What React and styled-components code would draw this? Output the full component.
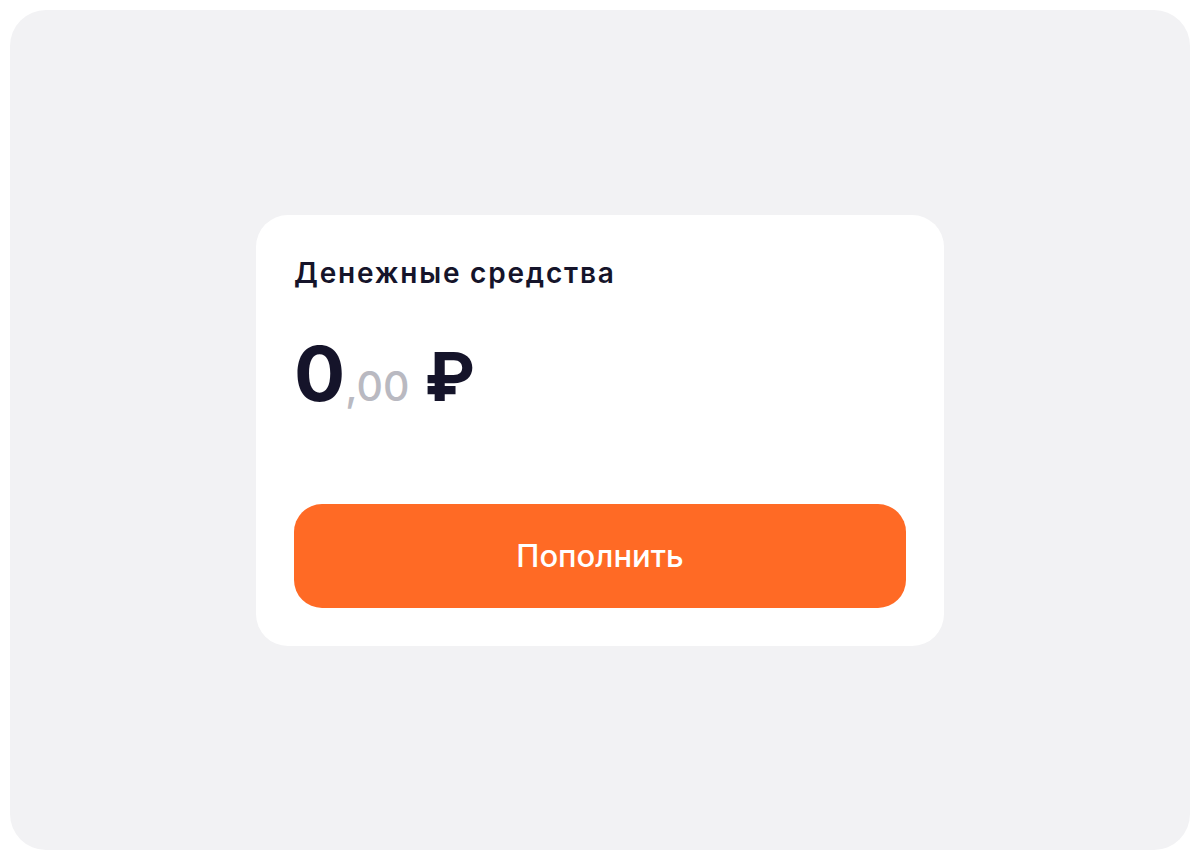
import React from 'react';
import styled, { createGlobalStyle } from 'styled-components';

const GlobalStyle = createGlobalStyle`
  html, body {
    margin: 0;
    padding: 0;
    background: #fff;
  }
  body {
    font-family: Inter, "Noto Sans", sans-serif;
  }
`;

const Page = styled.div`
  box-sizing: border-box;
  width: 1200px;
  height: 860px;
  padding: 10px;
`;

const Panel = styled.div`
  height: 100%;
  background: #f2f2f4;
  border-radius: 36px;
  display: flex;
  align-items: center;
  justify-content: center;
`;

const Card = styled.div`
  box-sizing: border-box;
  width: 688px;
  height: 431px;
  background: #fff;
  border-radius: 32px;
  padding: 38px;
  display: flex;
  flex-direction: column;
`;

const Title = styled.div`
  font-size: 28px;
  font-weight: 600;
  color: #15142a;
  line-height: 40px;
  letter-spacing: 1.8px;
`;

const Amount = styled.div`
  margin-top: 42px;
  display: flex;
  align-items: baseline;
  color: #15142a;
  line-height: 1;
`;

const Whole = styled.span`
  font-size: 76px;
  font-weight: 700;
`;

const Cents = styled.span`
  font-size: 41px;
  font-weight: 500;
  color: #b9b9c1;
  margin-left: 0;
`;

const Currency = styled.span`
  font-size: 68px;
  font-weight: 700;
  margin-left: 15px;
`;

const Button = styled.button`
  margin-top: auto;
  height: 104px;
  border: 0;
  border-radius: 28px;
  background: #ff6a25;
  color: #fff;
  font-family: inherit;
  font-size: 31px;
  font-weight: 500;
  cursor: pointer;
`;

const App = () => (
  <Page>
    <GlobalStyle />
    <Panel>
      <Card>
        <Title>Денежные средства</Title>
        <Amount>
          <Whole>0</Whole>
          <Cents>,00</Cents>
          <Currency>₽</Currency>
        </Amount>
        <Button>Пополнить</Button>
      </Card>
    </Panel>
  </Page>
);

export default App;
